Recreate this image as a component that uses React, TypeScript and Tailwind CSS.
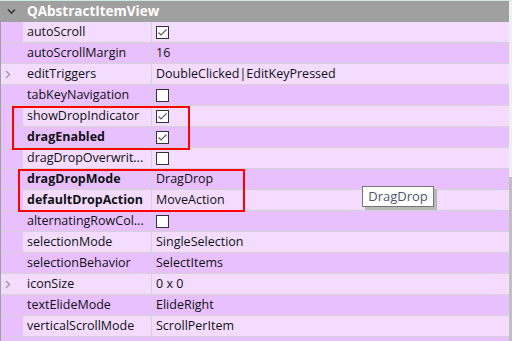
import React from "react";

type Row = {
  name: string;
  value?: string;
  check?: boolean | null;
  bold?: boolean;
  expand?: boolean;
};

const rows: Row[] = [
  { name: "autoScroll", check: true },
  { name: "autoScrollMargin", value: "16" },
  { name: "editTriggers", value: "DoubleClicked|EditKeyPressed", expand: true },
  { name: "tabKeyNavigation", check: false },
  { name: "showDropIndicator", check: true },
  { name: "dragEnabled", check: true, bold: true },
  { name: "dragDropOverwrit...", check: false },
  { name: "dragDropMode", value: "DragDrop", bold: true },
  { name: "defaultDropAction", value: "MoveAction", bold: true },
  { name: "alternatingRowCol...", check: false },
  { name: "selectionMode", value: "SingleSelection" },
  { name: "selectionBehavior", value: "SelectItems" },
  { name: "iconSize", value: "0 x 0", expand: true },
  { name: "textElideMode", value: "ElideRight" },
  { name: "verticalScrollMode", value: "ScrollPerItem" },
  { name: "", value: "" },
];

function CheckBox({ on }: { on: boolean }) {
  return (
    <div className="w-[13px] h-[13px] border border-[#333333] bg-white flex items-center justify-center">
      {on && (
        <svg width="11" height="11" viewBox="0 0 11 11">
          <path d="M1.5 5.5 L4 8 L9.5 2.5" fill="none" stroke="#606060" strokeWidth="1.2" />
        </svg>
      )}
    </div>
  );
}

export default function App() {
  return (
    <div
      className="w-[512px] h-[341px] overflow-hidden relative bg-white text-[12.5px] text-[#111111]"
      style={{ fontFamily: '"Open Sans", "Noto Sans", sans-serif' }}
    >
      <div className="h-px bg-[#c8ece4]" />
      <div className="flex">
        <div className="w-[509px] border-l border-[#a0a0a0]">
          <div className="h-[21px] bg-[#a0a0a0] flex items-center">
            <div className="w-[26px] flex justify-center">
              <svg width="9" height="9" viewBox="0 0 9 9" className="ml-[-6px]">
                <path d="M1 2.5 L4.5 6 L8 2.5" fill="none" stroke="#3a3a3a" strokeWidth="1.6" />
              </svg>
            </div>
            <span className="font-bold text-white text-[13.5px] leading-none">QAbstractItemView</span>
          </div>
          {rows.map((r, i) => {
            const light = i % 2 === 0;
            const rowBg = light ? "bg-[#f3dcff]" : "bg-[#e9c0ff]";
            return (
              <div key={i} className={`h-[21px] flex border-b border-[#d6d0d8] ${rowBg}`}>
                <div
                  className={`w-[22px] flex items-center justify-center ${
                    r.expand ? "" : "bg-[#e9c0ff]"
                  }`}
                >
                  {r.expand && (
                    <svg width="8" height="9" viewBox="0 0 8 9" className="ml-[-8px]">
                      <path d="M2 1 L5.5 4.5 L2 8" fill="none" stroke="#a0a0a0" strokeWidth="1.5" />
                    </svg>
                  )}
                </div>
                <div
                  className={`w-[129px] flex items-center pl-[4px] border-r border-[#d6d0d8] whitespace-nowrap overflow-hidden ${
                    r.bold ? "font-bold" : ""
                  }`}
                >
                  {r.name}
                </div>
                <div className="flex-1 flex items-center pl-[4px] whitespace-nowrap">
                  {r.check !== undefined && r.check !== null ? <CheckBox on={r.check} /> : r.value}
                </div>
              </div>
            );
          })}
        </div>
        <div className="w-[3px] flex flex-col">
          <div className="h-[176px] bg-[#f0f0f0]" />
          <div className="flex-1 bg-[#c0c0c0]" />
        </div>
      </div>

      <div className="absolute left-[12px] top-[106px] w-[178px] h-[44px] border-2 border-[#ff0000]" />
      <div className="absolute left-[18px] top-[169px] w-[227px] h-[43px] border-2 border-[#ff0000]" />

      <div className="absolute left-[362px] top-[186px] w-[72px] h-[21px] border border-[#767676] bg-white flex items-center justify-center text-[13px] text-[#4b5670] shadow-[3px_3px_0_#b8b8b8]">
        DragDrop
      </div>
    </div>
  );
}
